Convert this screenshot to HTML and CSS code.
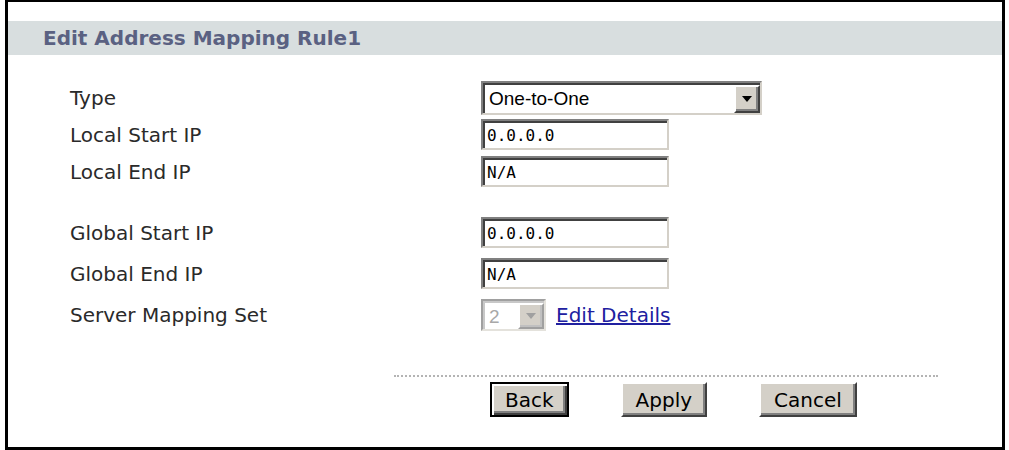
FILE: index.html
```html
<!DOCTYPE html>
<html lang="en">

<head>
    <meta charset="UTF-8">
    <title>Edit Address Mapping Rule1</title>
    <link rel="stylesheet" href="styles.css">
</head>

<body>
    <div class="frame">
        <div class="title">Edit Address Mapping Rule1</div>

        <div class="form">
            <!-- local side -->
            <div class="group">
                <div class="row">
                    <span class="label">Type</span>
                    <div class="combo wide">
                        <span class="combo-text">One-to-One</span>
                        <span class="arrow"><i></i></span>
                    </div>
                </div>
                <div class="row">
                    <span class="label">Local Start IP</span>
                    <input class="field" type="text" value="0.0.0.0">
                </div>
                <div class="row">
                    <span class="label">Local End IP</span>
                    <input class="field" type="text" value="N/A">
                </div>
            </div>

            <!-- global side -->
            <div class="group global">
                <div class="row">
                    <span class="label">Global Start IP</span>
                    <input class="field" type="text" value="0.0.0.0">
                </div>
                <div class="row">
                    <span class="label">Global End IP</span>
                    <input class="field" type="text" value="N/A">
                </div>
                <div class="row">
                    <span class="label">Server Mapping Set</span>
                    <div class="combo small disabled">
                        <span class="combo-text">2</span>
                        <span class="arrow"><i></i></span>
                    </div>
                    <a class="link" href="#">Edit Details</a>
                </div>
            </div>
        </div>

        <div class="footer">
            <button class="btn default">Back</button>
            <button class="btn">Apply</button>
            <button class="btn">Cancel</button>
        </div>
    </div>
</body>

</html>
```

FILE: styles.css
```css
body {
    margin: 0;
    background: #ffffff;
    font-family: "DejaVu Sans", Verdana, sans-serif;
}

.frame {
    width: 1000px;
    height: 450px;
    margin-left: 5px;
    box-sizing: border-box;
    border: 3px solid #000000;
    border-top-width: 2px;
    padding-top: 19px;
}

.title {
    height: 34px;
    line-height: 34px;
    padding-left: 35px;
    background-color: #d8dedf;
    color: #5a6182;
    font-size: 20px;
    font-weight: bold;
}

.form {
    margin-top: 24px;
    padding-left: 62px;
}

.row {
    display: flex;
    align-items: center;
    height: 37px;
}

.group.global {
    margin-top: 22px;
}

.group.global .row {
    height: 41px;
}

.label {
    width: 411px;
    flex: none;
    font-size: 20px;
    color: #2a2a2a;
}

/* sunken boxes */
.field,
.combo {
    box-sizing: border-box;
    border: 2px solid;
    border-color: #808080 #d4d0c8 #d4d0c8 #808080;
    box-shadow: inset 2px 2px 0 #404040;
    background: #ffffff;
}

.field {
    width: 188px;
    height: 31px;
    margin: 0;
    padding: 2px 0 0 4px;
    font-family: "DejaVu Sans Mono", monospace;
    font-size: 16px;
    color: #000000;
    outline: none;
}

.combo {
    display: flex;
    align-items: stretch;
    padding: 2px 0 0 2px;
}

.combo.wide {
    width: 281px;
    height: 34px;
}

.combo.small {
    width: 65px;
    height: 32px;
}

.combo-text {
    flex: 1;
    padding-left: 4px;
    font-family: "Liberation Sans", Arial, sans-serif;
    font-size: 19px;
    line-height: 28px;
    color: #000000;
}

.arrow {
    width: 26px;
    box-sizing: border-box;
    display: flex;
    align-items: center;
    justify-content: center;
    background: #d4d0c8;
    border: 2px solid;
    border-color: #ffffff #404040 #404040 #ffffff;
    box-shadow: inset -2px -2px 0 #808080;
}

.arrow i {
    width: 0;
    height: 0;
    border-left: 5px solid transparent;
    border-right: 5px solid transparent;
    border-top: 6px solid #000000;
}

.combo.disabled {
    border-color: #a0a0a0 #e4e2dc #e4e2dc #a0a0a0;
    box-shadow: inset 2px 2px 0 #c8c8c8;
}

.combo.disabled .combo-text {
    color: #a8a8a8;
}

.combo.disabled .arrow {
    border-color: #ffffff #a0a0a0 #a0a0a0 #ffffff;
    box-shadow: inset -2px -2px 0 #c0c0c0;
}

.combo.disabled .arrow i {
    border-top-color: #a0a0a0;
}

.link {
    margin-left: 10px;
    font-size: 20px;
    color: #2020a0;
}

.footer {
    display: flex;
    gap: 52px;
    width: 544px;
    margin: 40px 0 0 386px;
    padding: 5px 0 0 96px;
    box-sizing: border-box;
    border-top: 2px dotted #b4b4b4;
}

.btn {
    height: 35px;
    padding: 0 13px;
    background-color: #d4d0c8;
    border: 2px solid;
    border-color: #ffffff #404040 #404040 #ffffff;
    box-shadow: inset -2px -2px 0 #808080;
    font-family: "DejaVu Sans", Verdana, sans-serif;
    font-size: 20px;
    color: #000000;
    cursor: pointer;
}

.btn.default {
    border-color: #000000;
    box-shadow: inset 2px 2px 0 #ffffff, inset -2px -2px 0 #404040, inset -4px -4px 0 #808080;
}
```
